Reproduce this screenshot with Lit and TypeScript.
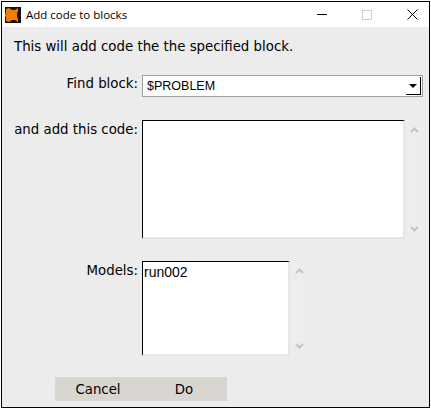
import { LitElement, html, css } from "lit";
import { customElement } from "lit/decorators.js";

const chevUp = html`<svg width="9" height="6" viewBox="0 0 9 6"><path d="M1 5 L4.5 1.5 L8 5" fill="none" stroke="#c4c4c4" stroke-width="2"/></svg>`;
const chevDown = html`<svg width="9" height="6" viewBox="0 0 9 6"><path d="M1 1 L4.5 4.5 L8 1" fill="none" stroke="#c4c4c4" stroke-width="2"/></svg>`;

@customElement("app-root")
export class AppRoot extends LitElement {
  static styles = css`
    :host { display: block; width: 431px; height: 409px; background: #fff; box-sizing: border-box; padding: 1px 1px 1px 1px; font-family: "DejaVu Sans", sans-serif; font-size: 13.33px; color: #000; overflow: hidden; }
    .win { height: 407px; border: 1px solid #000; box-sizing: border-box; background: #ececec; display: flex; flex-direction: column; }
    .title { height: 25px; background: #fff; display: flex; align-items: center; padding-left: 3px; flex: none; }
    .logo { margin-right: 5px; flex: none; display: block; }
    .ttext { font-family: "Open Sans", sans-serif; font-size: 11.5px; flex: 1; color: #000; }
    .wbtn { display: flex; align-items: center; justify-content: center; flex: none; }
    .min { width: 10px; margin-right: 35px; }
    .max { width: 10px; margin-right: 35px; }
    .cls { width: 11px; margin-right: 11px; }
    .body { flex: 1; display: flex; flex-direction: column; padding: 12px 0 0 12px; }
    .intro { line-height: 16px; height: 16px; margin-bottom: 20px; }
    .row { display: grid; grid-template-columns: 125px auto; column-gap: 3px; }
    .label { text-align: right; line-height: 16px; padding: 1px 1px 0 0; }
    .r2 .label, .r3 .label { padding-top: 2px; }
    .select { width: 281px; height: 22px; box-sizing: border-box; background: #fff; border: 1px solid #a0a0a0; display: flex; align-items: center; justify-content: space-between; font-family: "Liberation Sans", sans-serif; font-size: 12.5px; padding-left: 4px; }
    .arrow { width: 15px; height: 18px; background: #fff; border-right: 1px solid #000; border-bottom: 1px solid #000; box-sizing: border-box; display: flex; align-items: center; justify-content: center; margin-right: 1px; }
    .tri { width: 0; height: 0; border-left: 4px solid transparent; border-right: 4px solid transparent; border-top: 4px solid #000; }
    .field { display: flex; }
    .box { background: #fff; border-top: 1px solid #000; border-left: 1px solid #000; border-right: 2px solid #e6e6e6; border-bottom: 2px solid #e6e6e6; box-sizing: border-box; font-family: "Liberation Sans", sans-serif; font-size: 14px; padding: 2px 0 0 1px; line-height: 16px; }
    .code { width: 263px; height: 119px; }
    .models { width: 148px; height: 95px; }
    .sb { width: 17px; margin-left: 1px; background: #ededed; display: flex; flex-direction: column; align-items: center; justify-content: space-between; padding: 7px 0; box-sizing: border-box; }
    .r2 { margin-top: 23px; }
    .r3 { margin-top: 22px; }
    .btns { display: flex; margin: 21px 0 0 41px; }
    .btn { width: 86px; height: 24px; background: #d9d6d2; display: flex; align-items: center; justify-content: center; }
  `;
  render() {
    return html`<div class="win">
      <div class="title">
        <svg class="logo" width="16" height="16" viewBox="0 0 16 16"><rect width="16" height="16" fill="#141414"/><path d="M1 2 L4 1 L7 3 L10 3 L13 1 L13 4 L12 6 L12 10 L13 12 L13 15 L10 13 L7 13 L4 15 L1 14 L1 11 L0 8 L1 5Z" fill="#f57c00"/></svg>
        <span class="ttext">Add code to blocks</span>
        <span class="wbtn min"><svg width="10" height="2"><rect y="0" width="10" height="1" fill="#000"/></svg></span>
        <span class="wbtn max"><svg width="10" height="10"><rect x=".5" y=".5" width="9" height="9" fill="none" stroke="#cfcfcf"/></svg></span>
        <span class="wbtn cls"><svg width="11" height="11"><path d="M.5 .5 L10.5 10.5 M10.5 .5 L.5 10.5" stroke="#000" stroke-width="1"/></svg></span>
      </div>
      <div class="body">
        <div class="intro">This will add code the the specified block.</div>
        <div class="row">
          <div class="label">Find block:</div>
          <div class="select"><span>$PROBLEM</span><span class="arrow"><span class="tri"></span></span></div>
        </div>
        <div class="row r2">
          <div class="label">and add this code:</div>
          <div class="field"><div class="box code"></div><div class="sb">${chevUp}${chevDown}</div></div>
        </div>
        <div class="row r3">
          <div class="label">Models:</div>
          <div class="field"><div class="box models">run002</div><div class="sb">${chevUp}${chevDown}</div></div>
        </div>
        <div class="btns"><div class="btn">Cancel</div><div class="btn">Do</div></div>
      </div>
    </div>`;
  }
}
